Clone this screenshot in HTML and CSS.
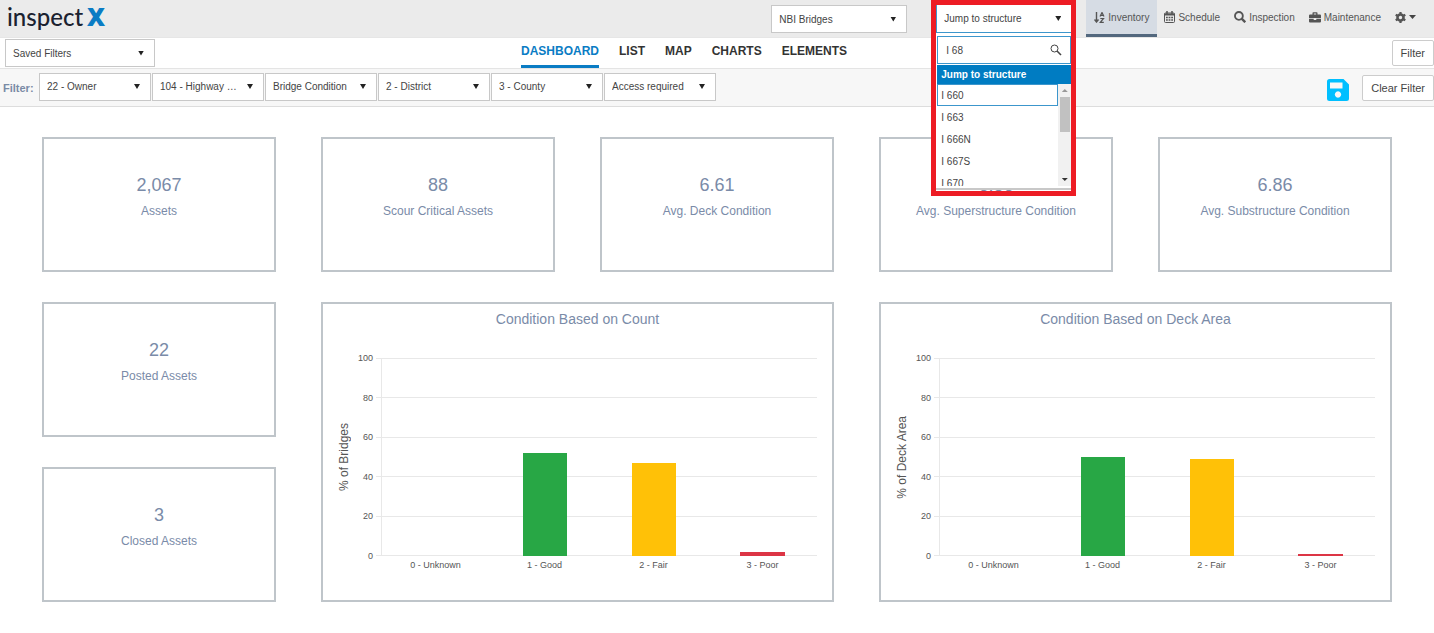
FILE: index.html
```html
<!DOCTYPE html>
<html lang="en">
<head>
    <meta charset="UTF-8">
    <meta name="viewport" content="width=device-width, initial-scale=1.0">
    <title>inspectX - Dashboard</title>
    <link rel="stylesheet" href="styles.css">
</head>
<body>

    <header class="topbar">
        <a class="logo" href="#">inspect<span class="logo-x">X</span></a>

        <label class="dropdown dropdown-type">
            <select aria-label="Structure type"><option>NBI Bridges</option></select>
        </label>

        <div class="jump">
            <label class="dropdown dropdown-jump">
                <select aria-label="Jump to structure"><option>Jump to structure</option></select>
            </label>
            <div class="jump-panel">
                <div class="jump-search">
                    <input type="text" value="I 68" aria-label="Search structures" autofocus>
                    <svg width="12" height="12" viewBox="0 0 12 12" fill="none" stroke="#444">
                        <circle cx="4.5" cy="4.5" r="3.5"/>
                        <path d="M7 7l4 4" stroke-width="1.6"/>
                    </svg>
                </div>
                <div class="jump-title">Jump to structure</div>
                <div class="jump-body">
                    <ul class="jump-list">
                        <li class="active">I 660</li>
                        <li>I 663</li>
                        <li>I 666N</li>
                        <li>I 667S</li>
                        <li>I 670</li>
                    </ul>
                    <div class="scrollbar">
                        <span class="scroll-up"></span>
                        <span class="scroll-thumb"></span>
                        <span class="scroll-down"></span>
                    </div>
                </div>
            </div>
            <div class="jump-highlight"></div>
        </div>

        <nav class="main-nav">
            <a class="active" href="#">
                <svg width="11" height="11" viewBox="0 0 11 11" fill="none" stroke="currentColor">
                    <path d="M2.5 0v9M.5 7.5l2 2.5 2-2.5" stroke-width="1.4"/>
                    <path d="M6 4.5L8 .5l2 4M6.7 3.3h2.6M6.3 6.5h3.2L6.3 10.3h3.5" stroke-width="1.2"/>
                </svg>
                Inventory
            </a>
            <a href="#">
                <svg width="11" height="12" viewBox="0 0 11 12" fill="none" stroke="currentColor">
                    <rect x=".5" y="2" width="10" height="9.5" rx="1"/>
                    <path d="M.5 3.500h10" stroke-width="2"/>
                    <path d="M3 0v3M8 0v3" stroke-width="1.5"/>
                    <path d="M2 6.500h7M2 9h7" stroke-width="1.500" stroke-dasharray="1.800 .8"/>
                </svg>
                Schedule
            </a>
            <a href="#">
                <svg width="12" height="12" viewBox="0 0 11 11" fill="none" stroke="currentColor">
                    <circle cx="4.5" cy="4.5" r="3.6" stroke-width="1.7"/>
                    <path d="M7 7l3.3 3.3" stroke-width="2.2"/>
                </svg>
                Inspection
            </a>
            <a href="#">
                <svg width="12" height="11" viewBox="0 0 12 11" fill="currentColor">
                    <path d="M3.5 2.5V1q0-.8.8-.8h3.4q.8 0 .8.8v1.5H11q1 0 1 1V6H0V3.500q0-1 1-1zM4.800 1.400v1.100h2.400V1.400zM0 6.800h4.700V8h2.600V6.800H12v2.700q0 1-1 1H1q-1 0-1-1z" fill-rule="evenodd"/>
                </svg>
                Maintenance
            </a>
            <a href="#" aria-label="Settings">
                <svg width="11" height="11" viewBox="0 0 11 11" fill="none" stroke="currentColor">
                    <circle cx="5.5" cy="5.5" r="3" stroke-width="2.6"/>
                    <path d="M5.500 0v2M5.500 9v2M.7 2.750l1.800 1M8.500 7.250l1.800 1M.7 8.250l1.800-1M8.500 3.750l1.800-1" stroke-width="2.200"/>
                </svg>
                <span class="caret"></span>
            </a>
        </nav>
    </header>

    <div class="tabbar">
        <label class="dropdown dropdown-saved">
            <select aria-label="Saved filters"><option>Saved Filters</option></select>
        </label>
        <nav class="tabs">
            <a class="active" href="#">DASHBOARD</a>
            <a href="#">LIST</a>
            <a href="#">MAP</a>
            <a href="#">CHARTS</a>
            <a href="#">ELEMENTS</a>
        </nav>
        <button class="btn" type="button">Filter</button>
    </div>

    <div class="filterbar">
        <span class="filter-label">Filter:</span>
        <div class="filters">
            <label class="dropdown"><select aria-label="Owner"><option>22 - Owner</option></select></label>
            <label class="dropdown"><select aria-label="Highway"><option>104 - Highway …</option></select></label>
            <label class="dropdown"><select aria-label="Bridge condition"><option>Bridge Condition</option></select></label>
            <label class="dropdown"><select aria-label="District"><option>2 - District</option></select></label>
            <label class="dropdown"><select aria-label="County"><option>3 - County</option></select></label>
            <label class="dropdown"><select aria-label="Access"><option>Access required</option></select></label>
        </div>
        <button class="save-btn" type="button" aria-label="Save filter">
            <svg width="22" height="22" viewBox="0 0 22 22">
                <path fill="#00bfff" fill-rule="evenodd" d="M2.500 0H16.500L22 5.500V19.500Q22 22 19.500 22H2.500Q0 22 0 19.500V2.500Q0 0 2.500 0zM3 3.500V9.500H15.500V3.500zM11 12.300a3.200 3.200 0 1 0 .01 0z"/>
            </svg>
        </button>
        <button class="btn" type="button">Clear Filter</button>
    </div>

    <main class="dashboard">
        <section class="card"><strong>2,067</strong><span>Assets</span></section>
        <section class="card"><strong>88</strong><span>Scour Critical Assets</span></section>
        <section class="card"><strong>6.61</strong><span>Avg. Deck Condition</span></section>
        <section class="card"><strong>6.86</strong><span>Avg. Superstructure Condition</span></section>
        <section class="card"><strong>6.86</strong><span>Avg. Substructure Condition</span></section>

        <section class="card"><strong>22</strong><span>Posted Assets</span></section>

        <section class="chart">
            <h2>Condition Based on Count</h2>
            <div class="chart-body">
                <div class="axis-title">% of Bridges</div>
                <div class="ticks">
                    <span>100</span><span>80</span><span>60</span><span>40</span><span>20</span><span>0</span>
                </div>
                <div class="plot">
                    <div class="lines"><i></i><i></i><i></i><i></i><i></i><i></i></div>
                    <div class="bars">
                        <div class="bar" style="height: 0%"></div>
                        <div class="bar good" style="height: 52%"></div>
                        <div class="bar fair" style="height: 47%"></div>
                        <div class="bar poor" style="height: 2%"></div>
                    </div>
                </div>
                <div class="labels">
                    <span>0 - Unknown</span><span>1 - Good</span><span>2 - Fair</span><span>3 - Poor</span>
                </div>
            </div>
        </section>

        <section class="chart">
            <h2>Condition Based on Deck Area</h2>
            <div class="chart-body">
                <div class="axis-title">% of Deck Area</div>
                <div class="ticks">
                    <span>100</span><span>80</span><span>60</span><span>40</span><span>20</span><span>0</span>
                </div>
                <div class="plot">
                    <div class="lines"><i></i><i></i><i></i><i></i><i></i><i></i></div>
                    <div class="bars">
                        <div class="bar" style="height: 0%"></div>
                        <div class="bar good" style="height: 50%"></div>
                        <div class="bar fair" style="height: 49%"></div>
                        <div class="bar poor" style="height: 1%"></div>
                    </div>
                </div>
                <div class="labels">
                    <span>0 - Unknown</span><span>1 - Good</span><span>2 - Fair</span><span>3 - Poor</span>
                </div>
            </div>
        </section>

        <section class="card"><strong>3</strong><span>Closed Assets</span></section>
    </main>

</body>
</html>
```
FILE: styles.css
```css
* {
    box-sizing: border-box;
}

body {
    margin: 0;
    font-family: "Liberation Sans", Arial, sans-serif;
    font-size: 10px;
    color: #444;
    background: #fff;
}

a {
    color: inherit;
    text-decoration: none;
}

/* top bar */
.topbar {
    display: flex;
    height: 38px;
    background: #ebebeb;
    border-bottom: 1px solid #e6e6e6;
}

.logo {
    margin-right: auto;
    padding-left: 7px;
    font-family: Lato, sans-serif;
    font-size: 24px;
    font-weight: 500;
    line-height: 32px;
    color: #1b2230;
}

.logo-x {
    margin-left: 4px;
    font-family: "Open Sans", sans-serif;
    font-weight: 800;
    font-size: 25px;
    color: #0a7cc4;
}

/* dropdowns, the arrow shares the grid cell of the select */
.dropdown {
    display: grid;
    width: 112px;
    height: 28px;
}

.dropdown select {
    grid-area: 1 / 1;
    appearance: none;
    margin: 0;
    padding: 0 20px 0 7px;
    font: inherit;
    color: #444;
    background: #fff;
    border: 1px solid #c8c8c8;
    border-radius: 0;
}

.dropdown::after {
    content: "";
    grid-area: 1 / 1;
    place-self: center end;
    margin-right: 11px;
    width: 6px;
    height: 5px;
    background: #222;
    clip-path: polygon(0 0, 100% 0, 50% 100%);
    pointer-events: none;
}

.dropdown-type {
    width: 136px;
    margin: 5px 29px 0 0;
}

.dropdown-saved {
    width: 150px;
}

.dropdown-jump {
    width: 136px;
    margin-top: 4px;
    height: 29px;
}

.dropdown-jump select {
    border-color: #3c96cc;
}

/* jump to structure */
.jump {
    position: relative;
    margin-right: 14px;
}

.jump-panel {
    position: absolute;
    z-index: 2;
    top: 33px;
    left: 0;
    width: 136px;
    padding: 3px 1px 2px;
    background: #fff;
    border-bottom: 2px solid #c8c8c8;
}

.jump-search {
    display: flex;
    align-items: center;
    height: 28px;
    padding: 0 8px;
    border: 1px solid #3c96cc;
}

.jump-search input {
    flex: 1;
    min-width: 0;
    padding: 0;
    font: inherit;
    color: #444;
    border: 0;
    outline: 0;
}

.jump-title {
    margin-top: 1px;
    padding-left: 4px;
    font-weight: bold;
    line-height: 19px;
    color: #fff;
    background: #007cc2;
}

.jump-body {
    display: flex;
    height: 102px;
    overflow: hidden;
}

.jump-list {
    flex: 1;
    margin: 0;
    padding: 0;
    list-style: none;
}

.jump-list li {
    height: 22px;
    padding-left: 3px;
    line-height: 21px;
    border: 1px solid transparent;
}

.jump-list li.active {
    border-color: #3c96cc;
}

.scrollbar {
    display: flex;
    flex-direction: column;
    align-items: center;
    width: 13px;
    padding: 5px 0;
    background: #f1f1f1;
}

.scroll-up,
.scroll-down {
    width: 6px;
    height: 3px;
    background: #999;
    clip-path: polygon(50% 0, 100% 100%, 0 100%);
}

.scroll-thumb {
    width: 10px;
    height: 35px;
    margin: 5px 0 auto;
    background: #c1c1c1;
}

.scroll-down {
    background: #333;
    clip-path: polygon(0 0, 100% 0, 50% 100%);
}

.jump-highlight {
    position: absolute;
    z-index: 3;
    top: 0;
    left: -5px;
    width: 145px;
    height: 196px;
    border: 5px solid #ed1c24;
    pointer-events: none;
}

/* main navigation */
.main-nav {
    display: flex;
    padding-right: 11px;
}

.main-nav a {
    display: flex;
    align-items: center;
    gap: 3px;
    height: 37px;
    padding: 0 7px;
    color: #555;
    border-bottom: 3px solid transparent;
}

.main-nav a.active {
    padding: 0 8px;
    background: #d6dce4;
    border-color: #53687e;
}

.caret {
    width: 7px;
    height: 4px;
    background: #444;
    clip-path: polygon(0 0, 100% 0, 50% 100%);
}

/* tabs */
.tabbar {
    display: grid;
    grid-template-columns: 1fr auto 1fr;
    align-items: center;
    height: 31px;
    padding-left: 5px;
    border-bottom: 1px solid #e4e4e4;
}

.tabs {
    display: flex;
    gap: 20px;
    align-self: stretch;
    margin-right: 71px;
    font-size: 12px;
    font-weight: bold;
    color: #333;
}

.tabs a {
    line-height: 27px;
    border-bottom: 3px solid transparent;
}

.tabs a.active {
    color: #0a7cc4;
    border-color: #0a7cc4;
}

.btn {
    height: 26px;
    padding: 0 8px;
    font: inherit;
    font-size: 11px;
    color: #444;
    background: #fff;
    border: 1px solid #ccc;
    border-radius: 2px;
}

.tabbar .btn {
    justify-self: end;
}

/* filters */
.filterbar {
    display: flex;
    align-items: center;
    height: 38px;
    padding-left: 3px;
    background: #f7f7f7;
    border-bottom: 1px solid #ddd;
}

.filter-label {
    width: 36px;
    font-size: 11px;
    font-weight: bold;
    color: #7a8ba5;
}

.filters {
    display: flex;
    gap: 1px;
    margin-right: auto;
    padding-bottom: 2px;
}

.save-btn {
    margin: 5px 13px 0 0;
    padding: 0;
    line-height: 0;
    background: none;
    border: 0;
}

/* dashboard */
.dashboard {
    display: grid;
    grid-template-columns: repeat(5, 1fr);
    grid-auto-rows: 135px;
    gap: 30px 45px;
    padding: 30px 42px;
    color: #7a8ba8;
}

.card,
.chart {
    border: 2px solid #bfc5ca;
}

.card {
    display: flex;
    flex-direction: column;
    align-items: center;
    gap: 8px;
    padding-top: 36px;
    font-size: 12px;
    line-height: 16px;
}

.card strong {
    font-size: 18px;
    font-weight: normal;
    line-height: 20px;
}

.chart {
    grid-column: span 2;
    grid-row: span 2;
    display: flex;
    flex-direction: column;
}

.chart h2 {
    margin: 6px 0 0;
    font-size: 14px;
    font-weight: normal;
    line-height: 18px;
    text-align: center;
}

.chart-body {
    flex: 1;
    display: grid;
    grid-template-columns: 14px 19px 1fr;
    grid-template-rows: 1fr 18px;
    column-gap: 3px;
    padding: 30px 15px 26px 14px;
    font-size: 9px;
    color: #555;
}

.axis-title {
    place-self: center;
    writing-mode: vertical-rl;
    transform: rotate(180deg);
    font-size: 12px;
}

.ticks {
    display: flex;
    flex-direction: column;
    justify-content: space-between;
    margin: -5px 0;
    line-height: 10px;
    text-align: right;
}

.plot {
    display: grid;
}

.lines,
.bars {
    grid-area: 1 / 1;
}

.lines {
    display: flex;
    flex-direction: column;
    justify-content: space-between;
}

.lines i {
    height: 1px;
    background: #e8e8e8;
}

.bars {
    display: grid;
    grid-template-columns: repeat(4, 1fr);
    align-items: end;
    justify-items: center;
    margin-left: 5px;
    border-left: 1px solid #e8e8e8;
}

.bar {
    width: 41%;
}

.good {
    background: #28a745;
}

.fair {
    background: #ffc107;
}

.poor {
    background: #dc3545;
}

.labels {
    grid-column: 3;
    display: grid;
    grid-template-columns: repeat(4, 1fr);
    margin-left: 5px;
    line-height: 18px;
    text-align: center;
}
```
